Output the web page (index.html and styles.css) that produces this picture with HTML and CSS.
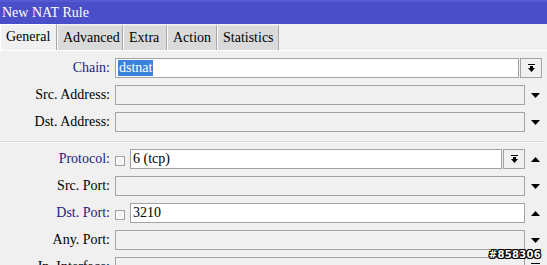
FILE: index.html
```html
<!DOCTYPE html>
<html lang="en">
<head>
    <meta charset="UTF-8">
    <meta name="viewport" content="width=device-width, initial-scale=1.0">
    <title>New NAT Rule</title>
    <link rel="stylesheet" href="styles.css">
</head>
<body>

    <div class="window">
        <div class="titlebar">New NAT Rule</div>

        <!-- Tabs -->
        <div class="tabs">
            <span class="tab active t-general">General</span>
            <span class="tab t-advanced">Advanced</span>
            <span class="tab t-extra">Extra</span>
            <span class="tab t-action">Action</span>
            <span class="tab t-stats">Statistics</span>
        </div>

        <div class="panel">
            <div class="row">
                <label class="lbl blue">Chain:</label>
                <div class="field white"><span class="sel">dstnat</span></div>
                <button class="dd chain-dd">
                    <svg width="7" height="8" viewBox="0 0 7 8"><rect x="0" y="0" width="7" height="1" fill="#000"/><rect x="2" y="2" width="3" height="2" fill="#000"/><polygon points="0,4 7,4 3.5,8" fill="#000"/></svg>
                </button>
            </div>
            <div class="row">
                <label class="lbl">Src. Address:</label>
                <div class="field"></div>
                <span class="arrow"><svg width="9" height="5" viewBox="0 0 9 5"><polygon points="0,0 9,0 4.5,5" fill="#000"/></svg></span>
            </div>
            <div class="row">
                <label class="lbl">Dst. Address:</label>
                <div class="field"></div>
                <span class="arrow"><svg width="9" height="5" viewBox="0 0 9 5"><polygon points="0,0 9,0 4.5,5" fill="#000"/></svg></span>
            </div>

            <div class="sep"></div>

            <div class="row">
                <label class="lbl blue">Protocol:</label>
                <span class="check"></span>
                <div class="field white">6 (tcp)</div>
                <button class="dd">
                    <svg width="7" height="8" viewBox="0 0 7 8"><rect x="0" y="0" width="7" height="1" fill="#000"/><rect x="2" y="2" width="3" height="2" fill="#000"/><polygon points="0,4 7,4 3.5,8" fill="#000"/></svg>
                </button>
                <span class="arrow"><svg width="9" height="5" viewBox="0 0 9 5"><polygon points="0,5 9,5 4.5,0" fill="#000"/></svg></span>
            </div>
            <div class="row">
                <label class="lbl">Src. Port:</label>
                <div class="field"></div>
                <span class="arrow"><svg width="9" height="5" viewBox="0 0 9 5"><polygon points="0,0 9,0 4.5,5" fill="#000"/></svg></span>
            </div>
            <div class="row">
                <label class="lbl blue">Dst. Port:</label>
                <span class="check"></span>
                <div class="field white">3210</div>
                <span class="arrow"><svg width="9" height="5" viewBox="0 0 9 5"><polygon points="0,5 9,5 4.5,0" fill="#000"/></svg></span>
            </div>
            <div class="row">
                <label class="lbl">Any. Port:</label>
                <div class="field"></div>
                <span class="arrow"><svg width="9" height="5" viewBox="0 0 9 5"><polygon points="0,0 9,0 4.5,5" fill="#000"/></svg></span>
            </div>
            <div class="row">
                <label class="lbl">In. Interface:</label>
                <div class="field"></div>
                <span class="arrow"><svg width="9" height="8" viewBox="0 0 9 8"><rect x="0" y="0" width="9" height="1" fill="#000"/><polygon points="0,3 9,3 4.5,8" fill="#000"/></svg></span>
            </div>
        </div>

        <!-- watermark -->
        <div class="stamp">#858306</div>
    </div>

</body>
</html>
```

FILE: styles.css
```css
* {
    margin: 0;
    padding: 0;
    box-sizing: border-box;
}

body {
    font-family: "Liberation Serif", "Times New Roman", serif;
    font-size: 14px;
    background: #f0f0f0;
    color: #000;
    overflow: hidden;
}

.window {
    position: relative;
    width: 547px;
    height: 265px;
    overflow: hidden;
}

.titlebar {
    height: 24px;
    background: #4a4ec8;
    border-top: 2px solid #5559d2;
    color: #fff;
    line-height: 22px;
    padding-left: 2px;
}

/* Tabs */
.tabs {
    display: flex;
    align-items: flex-end;
    height: 27px;
    padding-top: 1px;
    border-bottom: 1px solid #fff;
}

.tab {
    height: 25px;
    line-height: 24px;
    padding-left: 5px;
    white-space: nowrap;
    background: #dadada;
    border-left: 1px solid #fafafa;
    border-right: 1px solid #a8a8a8;
    border-top: 1px solid #e8e8e8;
}

.tab.active {
    background: #f0f0f0;
    height: 26px;
    border-left: 1px solid #fff;
    border-top: 1px solid #fff;
}

.t-general { width: 57px; }
.t-advanced { width: 66px; }
.t-extra { width: 44px; }
.t-action { width: 50px; }
.t-stats { width: 62px; }

.panel {
    display: flex;
    flex-direction: column;
    gap: 7px;
    padding: 7px 2px 0 0;
}

.row {
    display: flex;
    align-items: center;
    height: 20px;
}

.lbl {
    width: 110px;
    margin-right: 5px;
    text-align: right;
    white-space: nowrap;
}

.lbl.blue {
    color: #1d1d7e;
}

.field {
    flex: 1;
    height: 20px;
    border: 1px solid #a3a3a3;
    background: #f0f0f0;
    line-height: 18px;
    padding-left: 2px;
}

.field.white {
    background: #fff;
}

.sel {
    background: #3883dc;
    color: #fff;
    display: inline-block;
    line-height: 16px;
    padding: 0 1px;
}

.check {
    width: 10px;
    height: 10px;
    border: 1px solid #a3a3a3;
    background: #f6f6f6;
    margin: 4px 5px 0 0;
}

.dd {
    width: 22px;
    height: 20px;
    margin-left: 1px;
    border: 1px solid #a3a3a3;
    background: #f0f0f0;
    display: flex;
    align-items: center;
    justify-content: center;
}

.chain-dd {
    margin-right: 3px;
}

.arrow {
    width: 20px;
    height: 20px;
    display: flex;
    align-items: center;
    justify-content: center;
}

.sep {
    height: 1px;
    margin-top: 2px;
    background: #d9d9d9;
    box-shadow: 0 1px 0 #fafafa;
}

.stamp {
    position: absolute;
    right: 6px;
    top: 249px;
    font-family: "DejaVu Sans", sans-serif;
    font-size: 10px;
    font-weight: bold;
    color: #fff;
    letter-spacing: 0.3px;
    text-shadow: 1px 0 0 #000, -1px 0 0 #000, 0 1px 0 #000, 0 -1px 0 #000,
                 1px 1px 0 #000, -1px -1px 0 #000, 1px -1px 0 #000, -1px 1px 0 #000;
}
```
